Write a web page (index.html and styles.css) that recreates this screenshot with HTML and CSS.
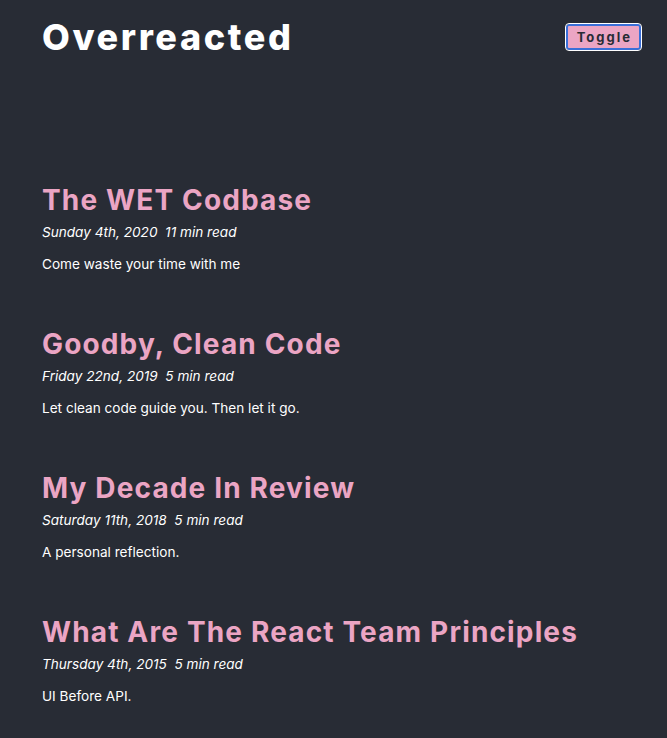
FILE: index.html
```html
<!DOCTYPE html>
<html>
<head>
<meta charset="utf-8">
<link rel="stylesheet" href="styles.css">
</head>
<body>
<div class="page">
  <header class="header">
    <h1 class="brand">Overreacted</h1>
    <button class="toggle">Toggle</button>
  </header>
  <main class="posts">
    <article class="post">
      <h2 class="post-title">The WET Codbase</h2>
      <p class="meta">Sunday 4th, 2020&nbsp; 11 min read</p>
      <p class="excerpt">Come waste your time with me</p>
    </article>
    <article class="post">
      <h2 class="post-title">Goodby, Clean Code</h2>
      <p class="meta">Friday 22nd, 2019&nbsp; 5 min read</p>
      <p class="excerpt">Let clean code guide you. Then let it go.</p>
    </article>
    <article class="post">
      <h2 class="post-title">My Decade In Review</h2>
      <p class="meta">Saturday 11th, 2018&nbsp; 5 min read</p>
      <p class="excerpt">A personal reflection.</p>
    </article>
    <article class="post">
      <h2 class="post-title">What Are The React Team Principles</h2>
      <p class="meta">Thursday 4th, 2015&nbsp; 5 min read</p>
      <p class="excerpt">UI Before API.</p>
    </article>
  </main>
</div>
</body>
</html>
```

FILE: styles.css
```css
html, body {
  margin: 0;
  padding: 0;
  background: #282c35;
  color: #ffffff;
  font-family: Inter, "Noto Sans", sans-serif;
}
.page {
  padding: 14px 26px 0 42px;
}
.header {
  display: flex;
  justify-content: space-between;
  align-items: flex-start;
}
.brand {
  margin: 0;
  font-size: 36px;
  font-weight: 800;
  letter-spacing: 2.6px;
  line-height: 46px;
  color: #ffffff;
}
.toggle {
  margin-top: 10px;
  background: #eba5c4;
  color: #282c35;
  border: 2px solid #3a6fd8;
  border-radius: 3px;
  outline: 1px solid #ffffff;
  font-family: Inter, sans-serif;
  font-weight: 700;
  font-size: 13px;
  line-height: 16px;
  letter-spacing: 2px;
  padding: 3px 7px 3px 9px;
}
.posts {
  margin-top: 123px;
}
.post {
  height: 144px;
}
.post-title {
  margin: 0;
  font-size: 28px;
  font-weight: 700;
  letter-spacing: 1.15px;
  line-height: 34px;
  color: #eba5c4;
}
.meta {
  margin: 2px 0 0;
  font-size: 13.6px;
  font-style: italic;
  line-height: 26px;
}
.excerpt {
  margin: 7px 0 0;
  font-size: 13.6px;
  line-height: 24px;
}
```
